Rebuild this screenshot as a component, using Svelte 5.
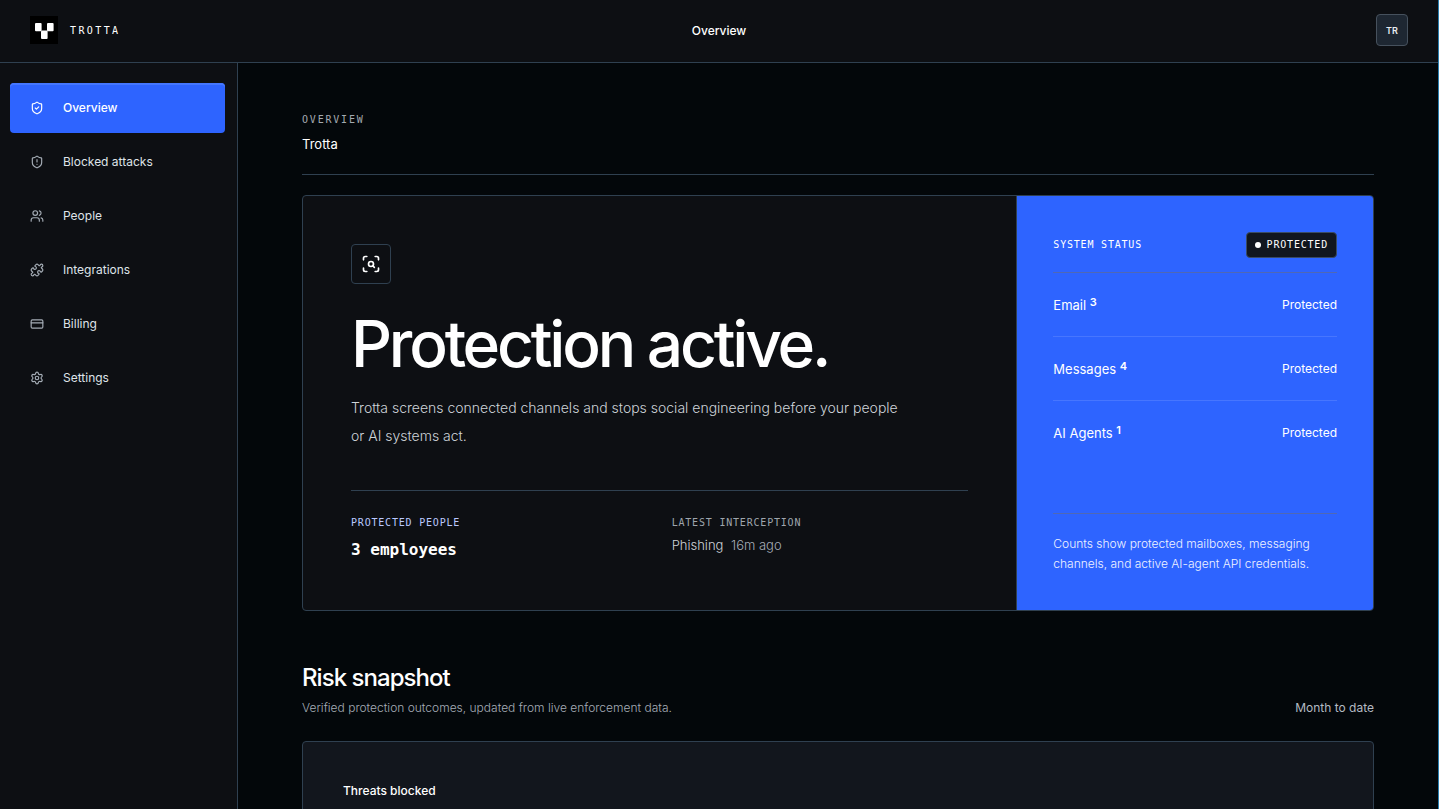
<script lang="ts">
	type NavItem = { label: string; icon: string; active?: boolean };

	const nav: NavItem[] = [
		{
			label: 'Overview',
			icon: '<path d="M20 13c0 5-3.5 7.5-7.66 8.95a1 1 0 0 1-.67-.01C7.5 20.5 4 18 4 13V6a1 1 0 0 1 1-1c2 0 4.5-1.2 6.24-2.72a1.17 1.17 0 0 1 1.52 0C14.51 3.81 17 5 19 5a1 1 0 0 1 1 1z"/><path d="m9 12 2 2 4-4"/>',
			active: true
		},
		{
			label: 'Blocked attacks',
			icon: '<path d="M20 13c0 5-3.5 7.5-7.66 8.95a1 1 0 0 1-.67-.01C7.5 20.5 4 18 4 13V6a1 1 0 0 1 1-1c2 0 4.5-1.2 6.24-2.72a1.17 1.17 0 0 1 1.52 0C14.51 3.81 17 5 19 5a1 1 0 0 1 1 1z"/><path d="M12 8v4"/><path d="M12 16h.01"/>'
		},
		{
			label: 'People',
			icon: '<path d="M16 21v-2a4 4 0 0 0-4-4H6a4 4 0 0 0-4 4v2"/><circle cx="9" cy="7" r="4"/><path d="M22 21v-2a4 4 0 0 0-3-3.87"/><path d="M16 3.13a4 4 0 0 1 0 7.75"/>'
		},
		{
			label: 'Integrations',
			icon: '<path d="M15.39 4.39a1 1 0 0 0 1.68-.474 2.5 2.5 0 1 1 3.014 3.015 1 1 0 0 0-.474 1.68l1.683 1.682a2.414 2.414 0 0 1 0 3.414L19.61 15.39a1 1 0 0 1-1.68-.474 2.5 2.5 0 1 0-3.014 3.015 1 1 0 0 1 .474 1.68l-1.683 1.682a2.414 2.414 0 0 1-3.414 0L8.61 19.61a1 1 0 0 0-1.68.474 2.5 2.5 0 1 1-3.014-3.015 1 1 0 0 0 .474-1.68l-1.683-1.682a2.414 2.414 0 0 1 0-3.414L4.39 8.61a1 1 0 0 1 1.68.474 2.5 2.5 0 1 0 3.014-3.015 1 1 0 0 1-.474-1.68l1.683-1.682a2.414 2.414 0 0 1 3.414 0z"/>'
		},
		{
			label: 'Billing',
			icon: '<rect width="20" height="14" x="2" y="5" rx="2"/><path d="M2 10h20"/>'
		},
		{
			label: 'Settings',
			icon: '<path d="M9.671 4.136a2.34 2.34 0 0 1 4.659 0 2.34 2.34 0 0 0 3.319 1.915 2.34 2.34 0 0 1 2.33 4.033 2.34 2.34 0 0 0 0 3.831 2.34 2.34 0 0 1-2.33 4.033 2.34 2.34 0 0 0-3.319 1.915 2.34 2.34 0 0 1-4.659 0 2.34 2.34 0 0 0-3.32-1.915 2.34 2.34 0 0 1-2.33-4.033 2.34 2.34 0 0 0 0-3.831A2.34 2.34 0 0 1 6.35 6.051a2.34 2.34 0 0 0 3.319-1.915"/><circle cx="12" cy="12" r="3"/>'
		}
	];

	const channels = [
		{ name: 'Email', count: 3, status: 'Protected' },
		{ name: 'Messages', count: 4, status: 'Protected' },
		{ name: 'AI Agents', count: 1, status: 'Protected' }
	];
</script>

<div class="shell">
	<header class="topbar">
		<a class="brand" href="#home">
			<svg class="logo" viewBox="0 0 28 28" aria-hidden="true">
				<rect width="28" height="28" fill="#000" />
				<rect x="5" y="7" width="6.6" height="8.2" rx="1" fill="#fff" />
				<rect x="17" y="7" width="6.6" height="8.2" rx="1" fill="#fff" />
				<rect x="11" y="14.6" width="6.6" height="8.4" rx="1" fill="#fff" />
			</svg>
			<span class="mono">TROTTA</span>
		</a>
		<span class="page-name">Overview</span>
		<button class="avatar" type="button">TR</button>
	</header>

	<div class="body">
		<nav class="sidebar">
			{#each nav as item}
				<a class="nav-item" class:active={item.active} href="#{item.label}">
					<svg class="icon" viewBox="0 0 24 24" aria-hidden="true">{@html item.icon}</svg>
					<span>{item.label}</span>
				</a>
			{/each}
		</nav>

		<main class="content">
			<div class="page-head">
				<p class="mono eyebrow">OVERVIEW</p>
				<p class="org">Trotta</p>
			</div>

			<section class="hero">
				<div class="hero-main">
					<div class="hero-icon">
						<svg class="icon" viewBox="0 0 24 24" aria-hidden="true">
							<path d="M3 7V5a2 2 0 0 1 2-2h2" />
							<path d="M17 3h2a2 2 0 0 1 2 2v2" />
							<path d="M21 17v2a2 2 0 0 1-2 2h-2" />
							<path d="M7 21H5a2 2 0 0 1-2-2v-2" />
							<circle cx="12" cy="12" r="3" />
							<path d="m16 16-1.9-1.9" />
						</svg>
					</div>
					<h1>Protection active.</h1>
					<p class="lead">
						Trotta screens connected channels and stops social engineering before your people or AI
						systems act.
					</p>
					<dl class="stats">
						<div>
							<dt class="mono accent">PROTECTED PEOPLE</dt>
							<dd class="people">3 employees</dd>
						</div>
						<div>
							<dt class="mono">LATEST INTERCEPTION</dt>
							<dd class="latest">Phishing <span>16m ago</span></dd>
						</div>
					</dl>
				</div>

				<aside class="status">
					<div class="status-head">
						<h2 class="mono">SYSTEM STATUS</h2>
						<span class="mono badge"><i class="dot"></i>PROTECTED</span>
					</div>
					<ul>
						{#each channels as channel}
							<li>
								<span class="channel">{channel.name} <b>{channel.count}</b></span>
								<span>{channel.status}</span>
							</li>
						{/each}
					</ul>
					<p class="note">
						Counts show protected mailboxes, messaging channels, and active AI-agent API credentials.
					</p>
				</aside>
			</section>

			<section class="risk">
				<h2>Risk snapshot</h2>
				<div class="risk-sub">
					<p>Verified protection outcomes, updated from live enforcement data.</p>
					<span>Month to date</span>
				</div>
				<div class="card">
					<h3>Threats blocked</h3>
				</div>
			</section>
		</main>
	</div>
</div>

<style>
	:global(body) {
		background: #03070a;
	}
	.shell {
		--panel: #0d0f13;
		--line: #2f4050;
		--blue: #2e64ff;
		display: flex;
		flex-direction: column;
		height: 100vh;
		box-sizing: border-box;
		overflow: hidden;
		border-right: 1px solid #2a7fb0;
		background: #03070a;
		color: #fff;
		font-family: Inter, 'Liberation Sans', sans-serif;
		font-size: 12px;
	}
	h1,
	h2,
	h3,
	p,
	ul,
	dl,
	dd {
		margin: 0;
		padding: 0;
	}
	a {
		color: inherit;
		text-decoration: none;
	}
	.mono {
		font-family: 'DejaVu Sans Mono', 'Liberation Mono', monospace;
		font-size: 10px;
		font-weight: 400;
		line-height: 14px;
		letter-spacing: 0.08em;
	}
	.icon {
		width: 14px;
		height: 14px;
		flex: none;
		fill: none;
		stroke: currentColor;
		stroke-width: 2;
		stroke-linecap: round;
		stroke-linejoin: round;
	}

	/* top bar */
	.topbar {
		display: grid;
		grid-template-columns: 1fr auto 1fr;
		align-items: center;
		flex: none;
		padding: 14px 30px 16px;
		border-bottom: 1px solid var(--line);
		background: var(--panel);
	}
	.brand {
		display: flex;
		align-items: center;
		gap: 12px;
	}
	.brand .mono {
		padding-top: 2px;
		letter-spacing: 0.24em;
	}
	.logo {
		width: 28px;
		height: 28px;
	}
	.page-name {
		font-weight: 500;
	}
	.avatar {
		justify-self: end;
		width: 32px;
		height: 32px;
		padding: 0;
		border: 1px solid #46515d;
		border-radius: 4px;
		background: #1e2732;
		color: #e8edf3;
		font-family: inherit;
		font-size: 9px;
		font-weight: 600;
	}

	/* sidebar */
	.body {
		display: flex;
		flex: 1;
		min-height: 0;
	}
	.sidebar {
		display: flex;
		flex-direction: column;
		gap: 4px;
		flex: none;
		width: 215px;
		padding: 20px 12px 20px 10px;
		border-right: 1px solid var(--line);
		background: var(--panel);
	}
	.nav-item {
		display: flex;
		align-items: center;
		gap: 19px;
		height: 50px;
		padding: 0 20px;
		border-radius: 4px;
		color: #dfe3e8;
	}
	.nav-item span {
		padding-bottom: 2px;
	}
	.nav-item .icon {
		color: #a4acb5;
	}
	.nav-item.active {
		background: var(--blue);
		box-shadow: inset 0 2px 0 #4477ff;
		color: #fff;
		font-weight: 500;
	}
	.nav-item.active .icon {
		color: #fff;
	}

	/* content */
	.content {
		flex: 1;
		min-width: 0;
		padding: 48px 64px;
		overflow-y: auto;
		scrollbar-width: none;
	}
	.page-head {
		padding-bottom: 20px;
		margin-bottom: 20px;
		border-bottom: 1px solid var(--line);
	}
	.eyebrow {
		line-height: 18px;
		letter-spacing: 0.18em;
		color: #a3a9b0;
	}
	.org {
		margin-top: 5px;
		font-size: 13px;
		line-height: 20px;
	}
	.hero {
		display: grid;
		grid-template-columns: 2fr 1fr;
		border: 1px solid var(--line);
		border-radius: 4px;
		background: var(--panel);
		overflow: hidden;
	}
	.hero-main {
		padding: 48px;
	}
	.hero-icon {
		display: grid;
		place-items: center;
		width: 38px;
		height: 38px;
		border: 1px solid var(--line);
		border-radius: 4px;
	}
	.hero-icon .icon {
		width: 20px;
		height: 20px;
	}
	h1 {
		margin-top: 28px;
		font-size: 64px;
		font-weight: 500;
		line-height: 64px;
		letter-spacing: -0.05em;
	}
	.lead {
		max-width: 560px;
		margin-top: 18px;
		color: #cfd4da;
		font-size: 14px;
		font-weight: 300;
		line-height: 28px;
	}
	.stats {
		display: grid;
		grid-template-columns: 1fr 1fr;
		gap: 24px;
		margin-top: 40px;
		padding-top: 24px;
		border-top: 1px solid var(--line);
	}
	dt.mono {
		color: #9ea5ad;
		line-height: 16px;
	}
	dt.accent {
		color: #b9c8ff;
	}
	.people {
		margin-top: 7px;
		font-family: 'DejaVu Sans Mono', 'Liberation Mono', monospace;
		font-size: 16px;
		font-weight: 700;
		line-height: 24px;
	}
	.latest {
		margin-top: 4px;
		color: #cfd4da;
		font-size: 13px;
		font-weight: 300;
		line-height: 20px;
	}
	.latest span {
		margin-left: 4px;
		color: #a6adb7;
	}

	/* system status */
	.status {
		display: flex;
		flex-direction: column;
		padding: 36px;
		border-left: 1px solid var(--line);
		background: var(--blue);
	}
	.status-head {
		display: flex;
		align-items: center;
		justify-content: space-between;
		padding-bottom: 14px;
		border-bottom: 1px solid #5068b4;
	}
	.badge {
		display: flex;
		align-items: center;
		gap: 6px;
		padding: 5px 8px;
		border: 1px solid #3a4b63;
		border-radius: 4px;
		background: #11161e;
	}
	.dot {
		width: 6px;
		height: 6px;
		border-radius: 50%;
		background: #fff;
	}
	ul {
		list-style: none;
	}
	li {
		display: flex;
		align-items: center;
		justify-content: space-between;
		height: 63px;
	}
	li + li {
		border-top: 1px solid #4776ff;
	}
	.channel {
		font-size: 13px;
	}
	.channel b {
		font-size: 11px;
		font-weight: 600;
		line-height: 1;
		vertical-align: 4px;
	}
	.note {
		margin-top: auto;
		padding-top: 20px;
		border-top: 1px solid #5068b4;
		color: #f0f3ff;
		font-weight: 300;
		line-height: 20px;
	}

	/* risk snapshot */
	.risk {
		margin-top: 51px;
	}
	.risk h2 {
		font-size: 24px;
		font-weight: 500;
		line-height: 32px;
		letter-spacing: -0.04em;
	}
	.risk-sub {
		display: flex;
		justify-content: space-between;
		margin-top: 4px;
		color: #a6adb7;
		font-weight: 300;
		line-height: 20px;
	}
	.risk-sub span {
		color: #b4bac2;
		font-weight: 400;
	}
	.card {
		min-height: 200px;
		margin-top: 23px;
		padding: 40px;
		border: 1px solid var(--line);
		border-radius: 4px;
		background: #12161d;
	}
	h3 {
		font-size: 12px;
		font-weight: 500;
		line-height: 18px;
	}
</style>
